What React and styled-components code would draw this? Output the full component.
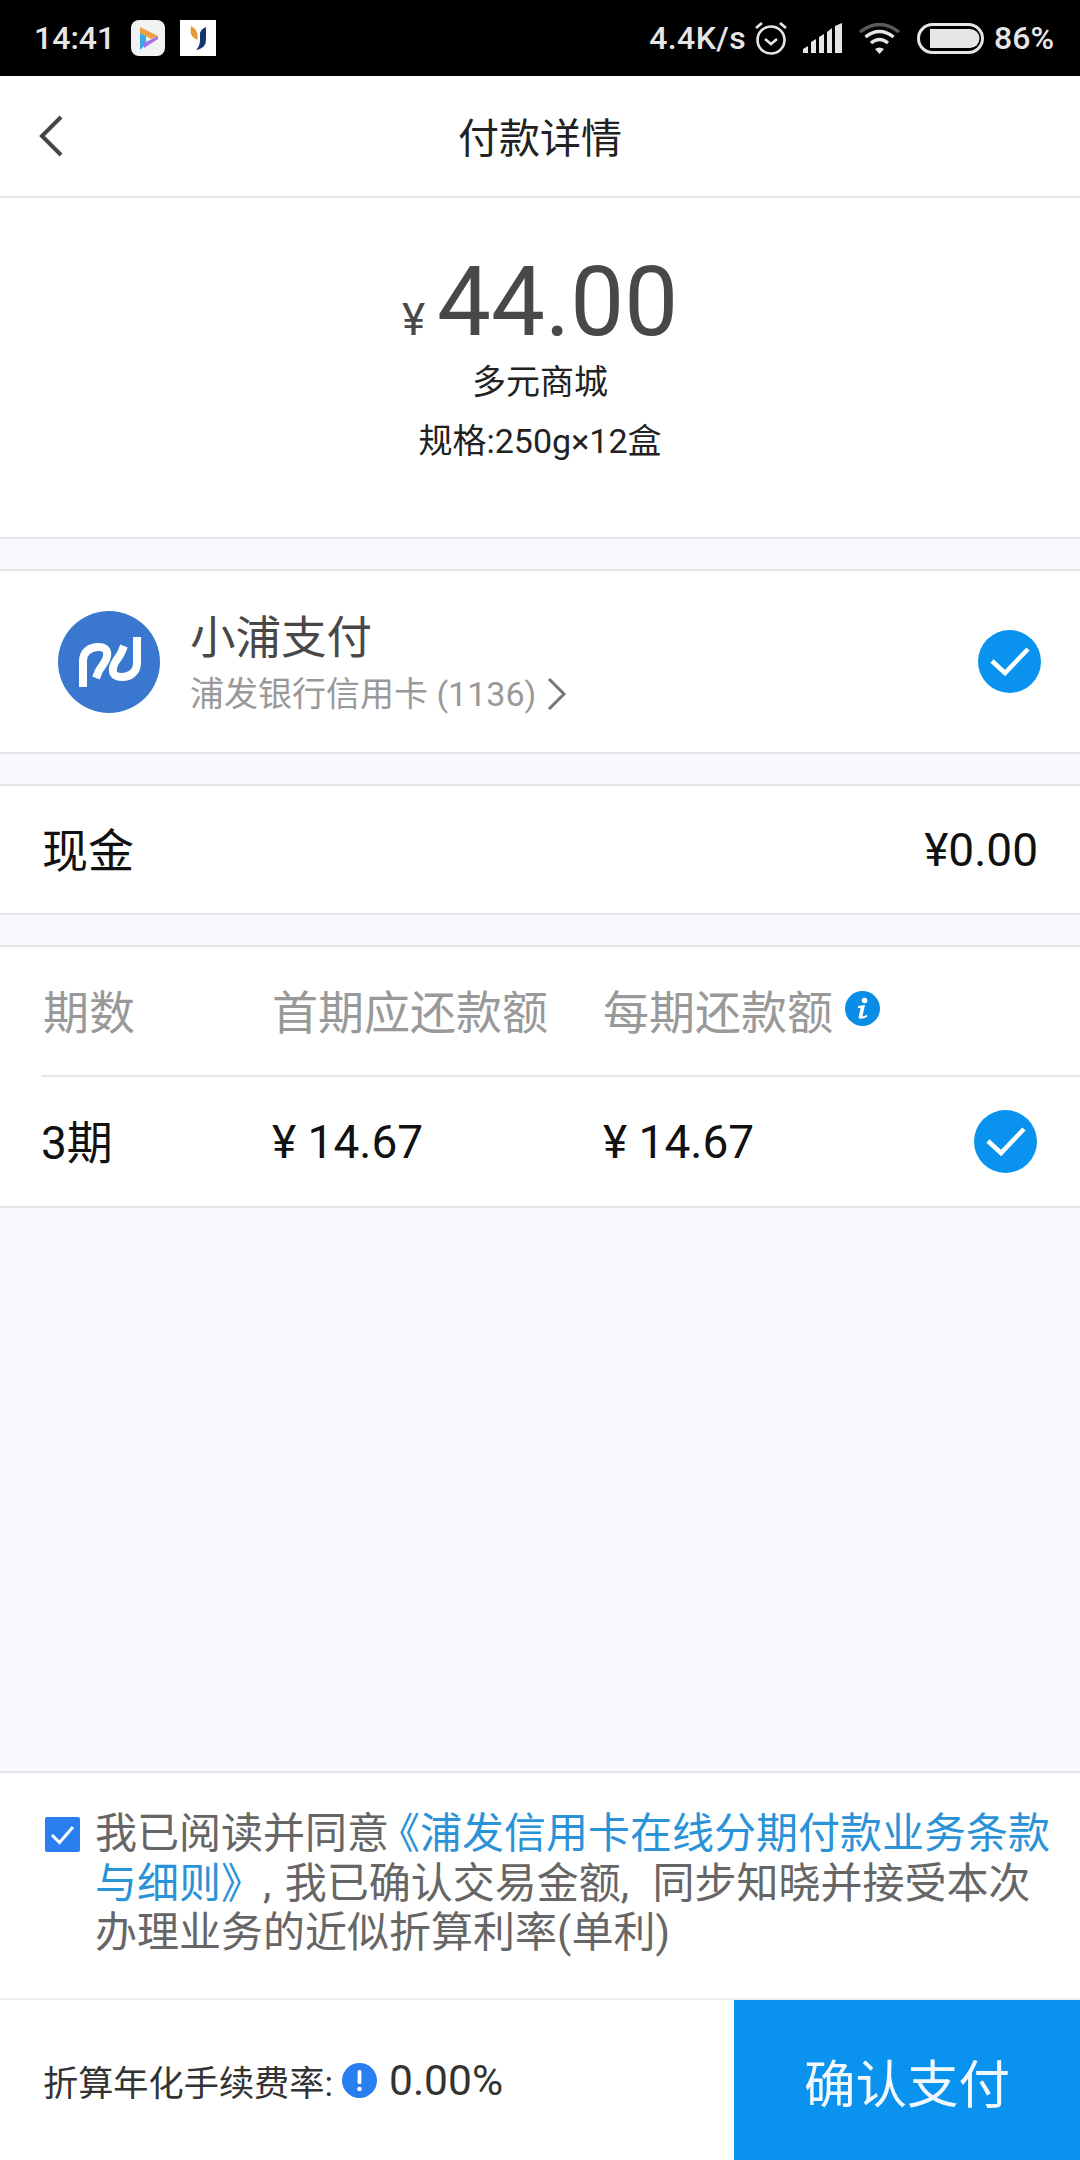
import React from "react";
import styled, { createGlobalStyle } from "styled-components";

const Global = createGlobalStyle`
  html, body { margin: 0; padding: 0; background: #f8f9fd; }
  * { box-sizing: border-box; }
`;
const CJK = `Roboto, "Noto Sans CJK SC", sans-serif`;

const Page = styled.div`
  width: 1080px; height: 2160px; display: flex; flex-direction: column;
  background: #f8f9fd; font-family: ${CJK}; overflow: hidden;
`;
const StatusBar = styled.div`
  height: 76px; flex: none; background: #000; color: #e6e6e6;
  display: flex; align-items: center; padding: 0 26px 0 34px; font-size: 32px; font-weight: 500;
`;
const StatusText = styled.span`
  font-size: ${p => p.$size || 32}px; margin-left: ${p => p.$ml || 0}px; line-height: 76px;
  letter-spacing: ${p => p.$ls || 0}px;
`;
const StatusIcon = styled.svg`
  display: block; flex: none; margin-left: ${p => p.$ml || 0}px;
`;
const Grow = styled.div`flex: 1;`;
const Nav = styled.div`
  height: 122px; flex: none; background: #fff; border-bottom: 2px solid #e3e4e7;
  display: grid; grid-template-columns: 1fr auto 1fr; align-items: center; padding-left: 38px;
`;
const BackButton = styled.svg`display: block;`;
const Title = styled.div`font-size: 41px; color: #222; margin-left: -38px; padding-bottom: 3px;`;
const Summary = styled.div`
  height: 341px; flex: none; background: #fff; border-bottom: 2px solid #e3e4e7;
  display: flex; flex-direction: column; align-items: center; padding-top: 54px;
`;
const Amount = styled.div`
  display: flex; align-items: baseline; color: #484848; height: 101px; line-height: 100px; font-size: 96px;
`;
const Yen = styled.span`font-size: 44px; margin-right: 12px;`;
const SummaryLine = styled.div`
  font-size: 34px; line-height: 59px; color: #222;
`;
const Gap = styled.div`height: 30px; flex: none;`;
const Card = styled.div`
  flex: none; background: #fff; border-top: 2px solid #e3e4e7; border-bottom: 2px solid #e3e4e7;
  height: ${p => p.$h}px;
`;
const PayRow = styled.div`
  height: 100%; display: flex; align-items: center; padding: 0 39px 0 58px;
`;
const PayLogo = styled.svg`display: block; flex: none;`;
const PayInfo = styled.div`flex: 1; margin-left: 30px; padding-top: 3px; display: flex; flex-direction: column;`;
const PayName = styled.div`font-size: 45.5px; line-height: 60px; color: #484848;`;
const PaySub = styled.div`
  font-size: 34px; line-height: 48px; color: #999; display: flex; align-items: center; gap: 11px; margin-top: 1px;
`;
const CashRow = styled.div`
  height: 100%; display: flex; align-items: center; justify-content: space-between;
  padding: 0 42px 0 42px; font-size: 46px; color: #111;
`;
const CjkLabel = styled.span`padding-bottom: 5px;`;
const Table = styled.div`padding-left: 41px; height: 100%; display: flex; flex-direction: column;`;
const TableRow = styled.div`
  height: ${p => p.$h}px; display: grid; grid-template-columns: 231px 331px 1fr auto; align-items: center;
  padding-right: 43px; font-size: 46px; color: ${p => p.$head ? "#999" : "#111"};
  border-bottom: ${p => p.$line ? "2px solid #e6e7ea" : "none"};
`;
const HeadCell = styled.div`display: flex; align-items: center; gap: 12px; padding-left: ${p => p.$pl || 0}px; padding-bottom: 5px;`;
const Footer = styled.div`flex: none; background: #fff;`;
const Agreement = styled.div`
  height: 229px; border-top: 2px solid #e3e4e7; border-bottom: 2px solid #eeeff1;
  display: flex; padding: 36px 20px 0 45px; gap: 15px;
`;
const AgreeText = styled.div`font-size: 42px; line-height: 49.5px; color: #666; width: 970px;`;
const AgreeLine = styled.div`white-space: nowrap;`;
const Link = styled.span`color: #2a93d8;`;
const Bracket = styled(Link)`font-feature-settings: "halt"; margin-left: 10px;`;
const Comma = styled.span`margin-right: ${p => p.$mr || 0}px;`;
const Checkbox = styled.svg`display: block; flex: none; margin-top: 8px;`;
const Bottom = styled.div`
  height: 160px; display: grid; grid-template-columns: 734px 1fr;
`;
const Rate = styled.div`
  display: flex; align-items: center; padding-left: 43px; font-size: 35.2px; color: #333;
`;
const RateValue = styled.span`font-size: 42.5px; margin-left: 12px;`;
const RateIcon = styled.svg`display: block; margin-left: 9px;`;
const Confirm = styled.div`
  background: #0a93ee; color: #f2f8fe; font-size: 51.5px; display: flex; align-items: center; justify-content: center;
`;
const CheckIcon = styled.svg`display: block; flex: none;`;

const BlueCheck = () => (
  <CheckIcon width="63" height="63" viewBox="0 0 63 63">
    <circle cx="31.5" cy="31.5" r="31.5" fill="#0a93ee" />
    <path d="M14 31 L27 43 L50 19" fill="none" stroke="#fff" strokeWidth="4.5" />
  </CheckIcon>
);

export default function App() {
  return (
    <Page>
      <Global />
      <StatusBar>
        <StatusText>14:41</StatusText>
        <StatusIcon $ml={16} width="34" height="36" viewBox="0 0 34 36">
          <rect width="34" height="36" rx="8" fill="#f1f2f4" />
          <path d="M9 13 L15 15 V24 L9 30 Z" fill="#36a8ee" />
          <path d="M9 7 L27 16 L20 19 L9 13 Z" fill="#ee9f45" />
          <path d="M27 16 V19 L13 28 V23 Z" fill="#a670ea" />
        </StatusIcon>
        <StatusIcon $ml={15} width="36" height="36" viewBox="0 0 36 36">
          <rect width="36" height="36" fill="#fff" />
          <path d="M11 6 Q17 9 17.5 15 V20 Q11 17 10.5 12 Z" fill="#e69a35" />
          <path d="M26 7 V20 Q26 28 16 30 Q20 26 20 20 V13 Q21 9 26 7 Z" fill="#16356e" />
        </StatusIcon>
        <Grow />
        <StatusText $size={32} $ls={0.4}>4.4K/s</StatusText>
        <StatusIcon $ml={8} width="34" height="36" viewBox="0 0 34 36" fill="none" stroke="#e6e6e6">
          <circle cx="17" cy="20" r="13.5" strokeWidth="2.6" />
          <path d="M11 19 L17 24 L23 19" strokeWidth="2.6" />
          <path d="M2 8 L8 3 M32 8 L26 3" strokeWidth="2.8" />
        </StatusIcon>
        <StatusIcon $ml={15} width="40" height="30" viewBox="0 0 40 30" fill="#e6e6e6">
          <path d="M0 30 V26 L5 23 V30 Z M8 30 V19 L13 16 V30 Z M16 30 V14 L21 11 V30 Z M24 30 V9 L29 5 V30 Z M32 30 V3 L39 0 V30 Z" />
        </StatusIcon>
        <StatusIcon $ml={15} width="43" height="32" viewBox="0 0 43 32" fill="none" strokeWidth="3.4">
          <path d="M2 10 Q21.5 -5 41 10" stroke="#5a5a5a" />
          <path d="M7.5 15 Q21.5 4 35.5 15" stroke="#e6e6e6" />
          <path d="M13 21 Q21.5 14 30 21" stroke="#e6e6e6" />
          <path d="M17 27 L21.5 32 L26 27 Q21.5 24 17 27 Z" fill="#e6e6e6" stroke="none" />
        </StatusIcon>
        <StatusIcon $ml={16} width="67" height="31" viewBox="0 0 67 31">
          <rect x="1.5" y="1.5" width="64" height="28" rx="14" fill="none" stroke="#e6e6e6" strokeWidth="3" />
          <path d="M13 6 H53 A9.5 9.5 0 0 1 53 25 H13 Z" fill="#e6e6e6" />
        </StatusIcon>
        <StatusText $ml={10} $size={32}>86%</StatusText>
      </StatusBar>

      <Nav>
        <BackButton width="26" height="42" viewBox="0 0 26 42">
          <path d="M23 2 L4 21 L23 40" fill="none" stroke="#444" strokeWidth="4" />
        </BackButton>
        <Title>付款详情</Title>
        <div />
      </Nav>

      <Summary>
        <Amount><Yen>¥</Yen>44.00</Amount>
        <SummaryLine>多元商城</SummaryLine>
        <SummaryLine>规格:250g×12盒</SummaryLine>
      </Summary>
      <Gap />

      <Card $h={185}>
        <PayRow>
          <PayLogo width="102" height="102" viewBox="0 0 102 102">
            <circle cx="51" cy="51" r="51" fill="#3a78cf" />
            <g fill="none" stroke="#fff" strokeWidth="8">
              <path d="M25 76 V50 C25 41 32 36 40 36 C47 36 50 39 49 45 C48 52 42 56 40 62 L38 67" />
              <path d="M79 26 V52 C79 61 72 66 64 66 C57 66 54 63 55 57 C56 50 62 46 64 40 L66 35" />
            </g>
          </PayLogo>
          <PayInfo>
            <PayName>小浦支付</PayName>
            <PaySub>
              浦发银行信用卡 (1136)
              <svg width="20" height="32" viewBox="0 0 20 32"><path d="M2 1 L17 16 L2 31" fill="none" stroke="#777" strokeWidth="3" /></svg>
            </PaySub>
          </PayInfo>
          <BlueCheck />
        </PayRow>
      </Card>
      <Gap />

      <Card $h={131}>
        <CashRow><CjkLabel>现金</CjkLabel><span>¥0.00</span></CashRow>
      </Card>
      <Gap />

      <Card $h={263}>
        <Table>
          <TableRow $h={130} $head $line>
            <HeadCell $pl={2}>期数</HeadCell>
            <HeadCell>首期应还款额</HeadCell>
            <HeadCell>
              每期还款额
              <svg width="35" height="35" viewBox="0 0 35 35">
                <circle cx="17.5" cy="17.5" r="17.5" fill="#0a8de6" />
                <circle cx="19.5" cy="9.5" r="2.8" fill="#fff" />
                <path d="M13 15 L20 14 L17.5 25 Q19 26 22 23.5 L22 26 Q16 29 13.5 27 L15.5 17 L13 17 Z" fill="#fff" />
              </svg>
            </HeadCell>
            <div />
          </TableRow>
          <TableRow $h={129}>
            <HeadCell>3期</HeadCell>
            <div>¥ 14.67</div>
            <div>¥ 14.67</div>
            <BlueCheck />
          </TableRow>
        </Table>
      </Card>

      <Grow />

      <Footer>
        <Agreement>
          <Checkbox width="35" height="35" viewBox="0 0 35 35">
            <rect width="35" height="35" rx="2" fill="#2a7ff0" />
            <path d="M7 18 L14.5 25.5 L28 10" fill="none" stroke="#fff" strokeWidth="3" />
          </Checkbox>
          <AgreeText>
            <AgreeLine>我已阅读并同意<Bracket>《</Bracket><Link>浦发信用卡在线分期付款业务条款</Link></AgreeLine>
            <AgreeLine><Link>与细则》</Link><Comma $mr={3}>, </Comma>我已确认交易金额<Comma $mr={13}>, </Comma>同步知晓并接受本次</AgreeLine>
            <AgreeLine>办理业务的近似折算利率(单利)</AgreeLine>
          </AgreeText>
        </Agreement>
        <Bottom>
          <Rate>
            折算年化手续费率:
            <RateIcon width="35" height="35" viewBox="0 0 35 35">
              <circle cx="17.5" cy="17.5" r="17.5" fill="#2a7ff0" />
              <rect x="15.6" y="7" width="3.8" height="14" rx="1.5" fill="#fff" />
              <circle cx="17.5" cy="26" r="2.3" fill="#fff" />
            </RateIcon>
            <RateValue>0.00%</RateValue>
          </Rate>
          <Confirm>确认支付</Confirm>
        </Bottom>
      </Footer>
    </Page>
  );
}
